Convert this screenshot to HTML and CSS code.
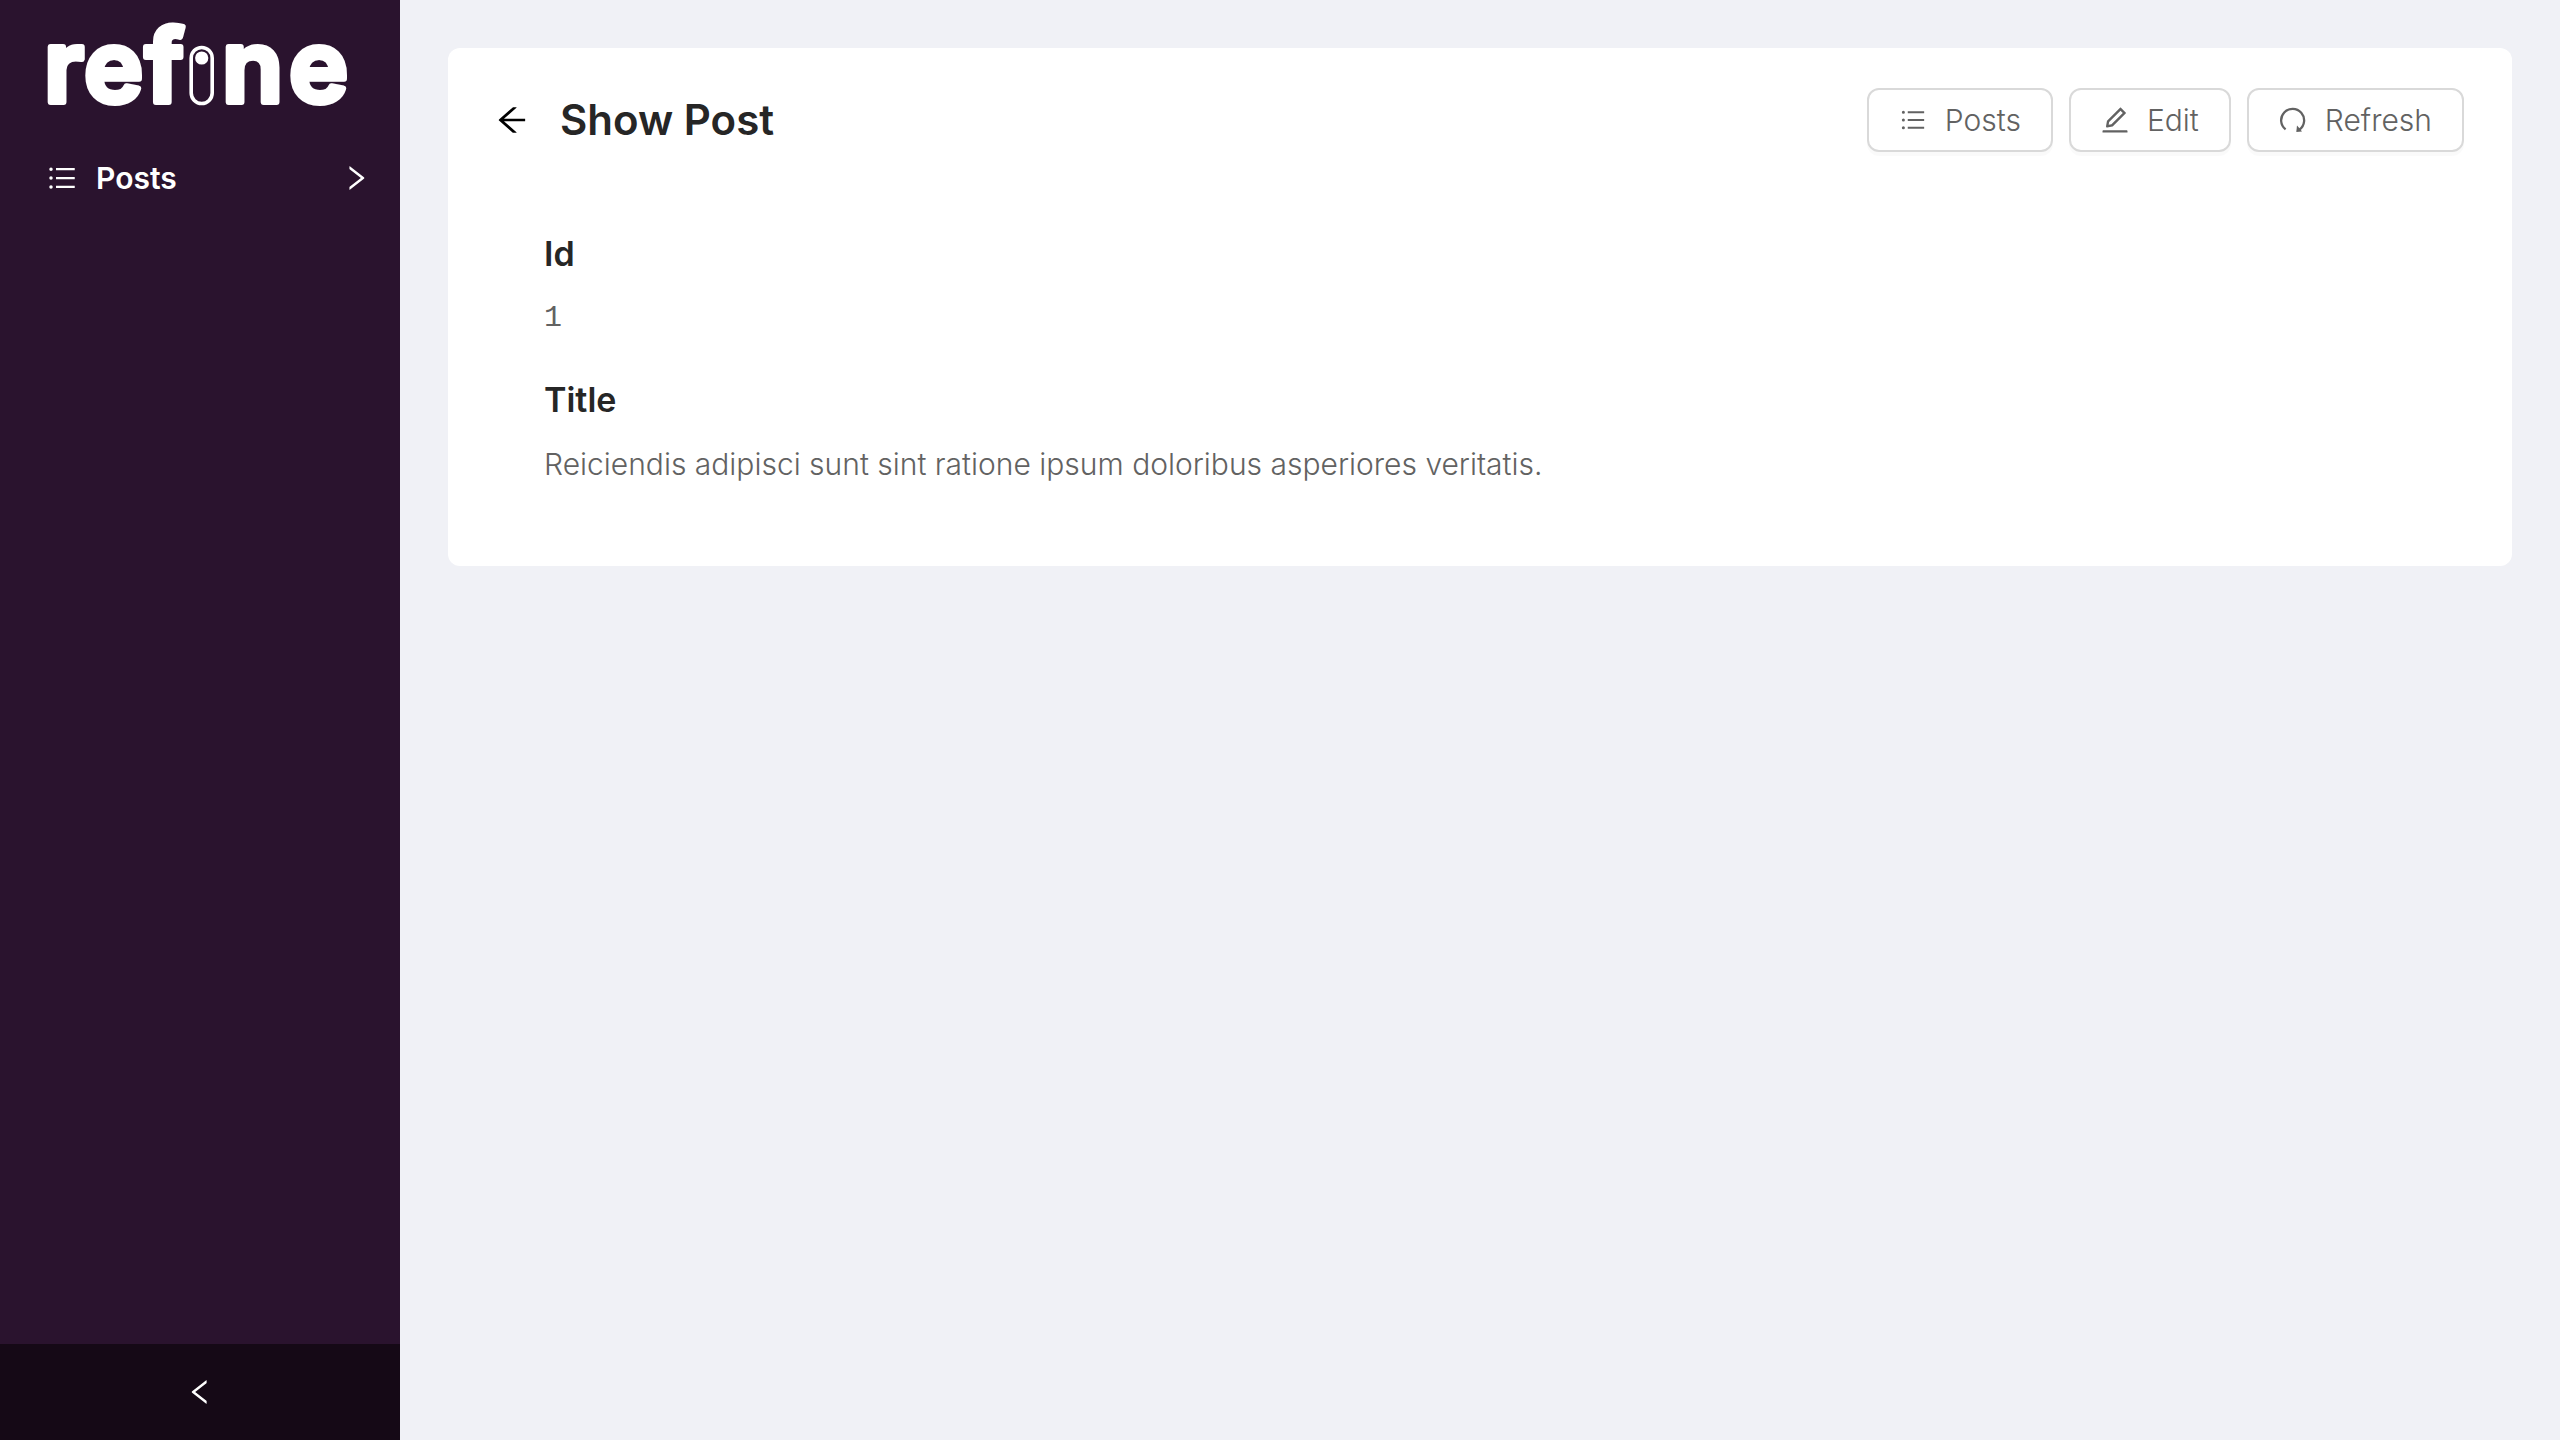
FILE: index.html
```html
<!DOCTYPE html>
<html lang="en">
<head>
<meta charset="utf-8">
<meta name="viewport" content="width=device-width, initial-scale=1">
<title>Show Post</title>
<link rel="stylesheet" href="styles.css">
</head>
<body>
<div class="layout">
  <aside class="sider">
    <a class="brand" href="#">
      <svg class="brand-logo" viewBox="0 0 304 84" role="img" aria-label="refine">
        <text class="wordmark" x="-4 36 97" y="78">ref</text>
        <rect x="143.200" y="23.500" width="21" height="56" rx="10.500" fill="none" stroke="currentColor" stroke-width="3.600"/>
        <circle cx="153.700" cy="34" r="6.600" fill="currentColor"/>
        <text class="wordmark" x="174 241" y="78">ne</text>
      </svg>
    </a>
    <nav class="menu">
      <a class="menu-item" href="#">
        <svg class="icon" viewBox="64 64 896 896" aria-hidden="true"><path d="M912 192H328c-4.400 0-8 3.600-8 8v56c0 4.400 3.600 8 8 8h584c4.400 0 8-3.600 8-8v-56c0-4.400-3.600-8-8-8zm0 284H328c-4.400 0-8 3.600-8 8v56c0 4.400 3.600 8 8 8h584c4.400 0 8-3.600 8-8v-56c0-4.400-3.600-8-8-8zm0 284H328c-4.400 0-8 3.600-8 8v56c0 4.400 3.600 8 8 8h584c4.400 0 8-3.600 8-8v-56c0-4.400-3.600-8-8-8zM104 228a56 56 0 10112 0 56 56 0 10-112 0zm0 284a56 56 0 10112 0 56 56 0 10-112 0zm0 284a56 56 0 10112 0 56 56 0 10-112 0z"/></svg>
        <span class="menu-label">Posts</span>
        <svg class="icon" viewBox="64 64 896 896" aria-hidden="true"><path d="M765.700 486.800L314.900 134.700A7.970 7.970 0 00302 141v77.300c0 4.900 2.300 9.600 6.100 12.600l360 281.100-360 281.100c-3.900 3-6.100 7.700-6.100 12.600V883c0 6.700 7.700 10.400 12.900 6.300l450.800-352.100a31.960 31.960 0 000-50.400z"/></svg>
      </a>
    </nav>
    <button class="collapse" type="button" aria-label="Collapse sidebar">
      <svg class="icon" viewBox="64 64 896 896" aria-hidden="true"><path d="M724 218.300V141c0-6.700-7.700-10.400-12.900-6.300L260.300 486.800a31.860 31.860 0 000 50.300l450.800 352.100c5.300 4.100 12.900.4 12.900-6.300v-77.300c0-4.900-2.300-9.600-6.100-12.600l-360-281 360-281.100c3.800-3 6.100-7.700 6.100-12.600z"/></svg>
    </button>
  </aside>
  <main class="content">
    <section class="card">
      <header class="card-header">
        <button class="back" type="button" aria-label="Back">
          <svg class="icon icon-large" viewBox="64 64 896 896" aria-hidden="true"><path d="M872 474H286.900l350.200-304c5.600-4.900 2.200-14-5.200-14h-88.500c-3.900 0-7.600 1.400-10.500 3.900L155 487.800a31.960 31.960 0 000 48.300L535.100 866c1.500 1.300 3.300 2 5.200 2h91.500c7.400 0 10.800-9.200 5.200-14L286.900 550H872c4.400 0 8-3.600 8-8v-60c0-4.400-3.600-8-8-8z"/></svg>
        </button>
        <h1 class="page-title">Show Post</h1>
        <div class="actions">
          <button class="btn" type="button">
            <svg class="icon" viewBox="0 0 1024 1024" aria-hidden="true"><path d="M912 192H328c-4.400 0-8 3.600-8 8v56c0 4.400 3.600 8 8 8h584c4.400 0 8-3.600 8-8v-56c0-4.400-3.600-8-8-8zm0 284H328c-4.400 0-8 3.600-8 8v56c0 4.400 3.600 8 8 8h584c4.400 0 8-3.600 8-8v-56c0-4.400-3.600-8-8-8zm0 284H328c-4.400 0-8 3.600-8 8v56c0 4.400 3.600 8 8 8h584c4.400 0 8-3.600 8-8v-56c0-4.400-3.600-8-8-8zM104 228a56 56 0 10112 0 56 56 0 10-112 0zm0 284a56 56 0 10112 0 56 56 0 10-112 0zm0 284a56 56 0 10112 0 56 56 0 10-112 0z"/></svg>
            <span>Posts</span>
          </button>
          <button class="btn" type="button">
            <svg class="icon" viewBox="64 64 896 896" aria-hidden="true"><path d="M257.700 752c2 0 4-.2 6-.5L431.900 722c2-.4 3.900-1.300 5.300-2.800l423.900-423.900a9.960 9.960 0 000-14.100L694.900 114.900c-1.900-1.900-4.400-2.900-7.100-2.900s-5.200 1-7.100 2.900L256.800 538.800c-1.500 1.500-2.400 3.300-2.800 5.300l-29.500 168.200a33.500 33.500 0 009.400 29.800c6.600 6.400 14.900 9.900 23.800 9.900zm67.400-174.400L687.800 215l73.300 73.300-362.700 362.600-88.900 15.700 15.600-89zM880 836H144c-17.700 0-32 14.300-32 32v36c0 4.400 3.600 8 8 8h784c4.400 0 8-3.600 8-8v-36c0-17.700-14.300-32-32-32z"/></svg>
            <span>Edit</span>
          </button>
          <button class="btn" type="button">
            <svg class="icon" viewBox="0 0 28 28" aria-hidden="true"><path d="M6.600 23.400A11.500 11.500 0 1 1 20.400 23.600" fill="none" stroke="currentColor" stroke-width="2.300"/><path d="M17.300 25.900L18 19.600L20 21.800L23 25.600z"/></svg>
            <span>Refresh</span>
          </button>
        </div>
      </header>
      <div class="card-body">
        <h2 class="field-label">Id</h2>
        <p class="field-value field-number">1</p>
        <h2 class="field-label">Title</h2>
        <p class="field-value">Reiciendis adipisci sunt sint ratione ipsum doloribus asperiores veritatis.</p>
      </div>
    </section>
  </main>
</div>
</body>
</html>
```
FILE: styles.css
```css
* {
  box-sizing: border-box;
}

body {
  margin: 0;
  background: #f0f1f6;
  color: #626262;
  font-family: Inter, "Open Sans", sans-serif;
  font-size: 30px;
  font-weight: 300;
  line-height: 44px;
}

button {
  font: inherit;
  cursor: pointer;
}

.layout {
  display: flex;
  min-height: 100vh;
}

.sider {
  display: flex;
  flex: none;
  flex-direction: column;
  width: 400px;
  background: #2a132e;
  color: #fff;
}

.brand {
  display: block;
  padding: 24px 48px 0;
  color: inherit;
}

.brand-logo {
  display: block;
  width: 100%;
  overflow: visible;
}

.wordmark {
  fill: currentColor;
  stroke: currentColor;
  stroke-width: 6px;
  stroke-linejoin: round;
  font-size: 100px;
  font-weight: 600;
}

.menu {
  flex: 1;
  padding-top: 30px;
}

.menu-item {
  display: flex;
  align-items: center;
  gap: 20px;
  height: 80px;
  padding: 0 30px 0 48px;
  color: inherit;
  font-weight: 600;
  text-decoration: none;
}

.menu-label {
  flex: 1;
}

.icon {
  display: block;
  flex: none;
  width: 28px;
  height: 28px;
  fill: currentColor;
}

.icon-large {
  width: 32px;
  height: 32px;
}

.collapse {
  display: flex;
  align-items: center;
  justify-content: center;
  height: 96px;
  border: 0;
  background: #150916;
  color: inherit;
}

.content {
  flex: 1;
  min-width: 0;
  padding: 48px;
}

.card {
  border-radius: 12px;
  background: #fff;
}

.card-header {
  display: flex;
  align-items: center;
  gap: 32px;
  padding: 40px 48px 0;
}

.back {
  padding: 0;
  border: 0;
  background: none;
  color: #000;
}

.page-title {
  flex: 1;
  margin: 0;
  color: #262626;
  font-size: 42px;
  font-weight: 600;
  line-height: 64px;
}

.actions {
  display: flex;
  gap: 16px;
}

.btn {
  display: flex;
  align-items: center;
  gap: 18px;
  height: 64px;
  padding: 0 30px;
  border: 2px solid #d9d9d9;
  border-radius: 12px;
  background: #fff;
  box-shadow: 0 4px 0 rgba(0, 0, 0, 0.02);
  color: #626262;
}

.card-body {
  padding: 78px 96px 80px;
}

.field-label {
  margin: 0 0 18px;
  color: #262626;
  font-size: 34px;
  font-weight: 600;
  line-height: 48px;
}

.field-value {
  margin: 0;
}

.field-value + .field-label {
  margin-top: 36px;
}

.field-number {
  font-family: "Liberation Mono", monospace;
}
```
